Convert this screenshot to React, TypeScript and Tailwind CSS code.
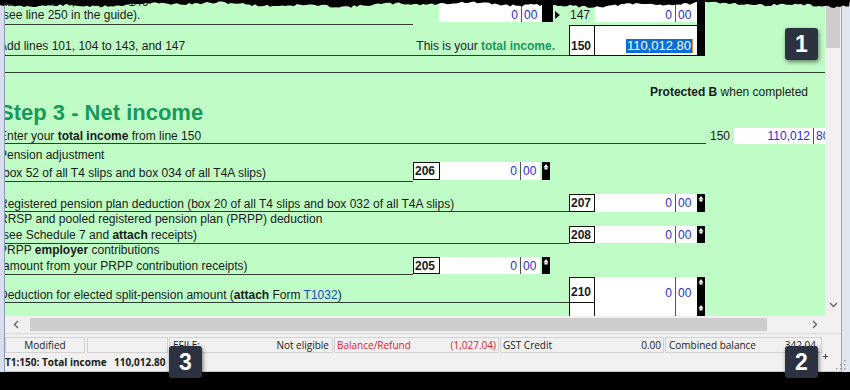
import React from "react";

const LINE = "border-b border-[#2f3d33]";
// the form is scrolled a few pixels right, so the first letter of each line is clipped
const CLIP = "indent-[-3px]";

// jagged "torn paper" edge along the top of the screenshot
const tornPoints = (() => {
  let s = 11;
  const rnd = () => {
    s = (s * 9301 + 49297) % 233280;
    return s / 233280;
  };
  const pts: string[] = ["0,0"];
  for (let x = 0; x <= 850; x += 3) {
    const base = 3.4 + 1.4 * Math.sin(x / 41) + 0.9 * Math.sin(x / 13);
    pts.push(`${x},${Math.max(1.5, base + rnd() * 2.4).toFixed(1)}`);
  }
  pts.push("850,0");
  return pts.join(" ");
})();

function Arrow() {
  return (
    <svg width="6" height="6" viewBox="0 0 6 6" className="block">
      <path d="M3 0L5.5 3.5H0.5Z" fill="#fff" />
      <rect x="1.5" y="3.5" width="3" height="2" fill="#fff" />
    </svg>
  );
}

function Spin({ h }: { h: string }) {
  return (
    <div className={`flex w-[8px] shrink-0 justify-center bg-black pt-[2px] ${h}`}>
      <Arrow />
    </div>
  );
}

function Money({
  box,
  dollars,
  tp = "",
  text = "0",
  cents = "00",
}: {
  box: string;
  dollars: string;
  tp?: string;
  text?: string;
  cents?: string;
}) {
  return (
    <div className={`flex shrink-0 bg-white text-[#2b2bdc] ${box}`}>
      <div className={`pr-[3px] text-right ${dollars} ${tp}`}>{text}</div>
      <div className="w-px self-stretch bg-[#555]" />
      <div className={`pl-[2px] ${tp}`}>{cents}</div>
    </div>
  );
}

function LeftField({ label, h }: { label: string; h: string }) {
  return (
    <>
      <div className={`flex w-[27px] shrink-0 items-center border border-[#111] bg-white pl-[1px] font-bold ${h}`}>
        {label}
      </div>
      <Money box={`w-[100px] items-center ${h}`} dollars="w-[80px]" />
      <div className="w-[2px] shrink-0" />
      <Spin h={h} />
    </>
  );
}

function RightField({ label, h, tall = false }: { label: string; h: string; tall?: boolean }) {
  return (
    <>
      <div
        className={`flex w-[26px] shrink-0 border border-[#111] bg-white pl-[1px] font-bold ${
          tall ? "items-end pb-[3px]" : "items-center"
        } ${h}`}
      >
        {label}
      </div>
      <Money
        box={`w-[102px] ${tall ? "items-end" : "items-center"} ${h}`}
        dollars="w-[80px]"
        tp={tall ? "pb-[3px]" : ""}
      />
      <Spin h={h} />
    </>
  );
}

function FormView() {
  return (
    <div className="h-[316px] overflow-hidden bg-[#bffcc6]">
      <div className="-ml-[3px] w-[840px] font-['Liberation_Sans',Arial,sans-serif] text-[12px] leading-[14px] text-[#1a1a1a]">
        <div className="flex h-0 items-start">
          <div className={`-mt-[5px] ${CLIP}`}>Add lines 144, 145, and 146</div>
        </div>

        {/* line 147 */}
        <div className="flex h-[25px] items-start">
          <div className={`flex h-[25px] w-[411px] shrink-0 items-end pb-[2px] ${LINE} ${CLIP}`}>
            (see line 250 in the guide).
          </div>
          <div className="w-[26px] shrink-0" />
          <Money box="h-[22px] w-[103px] items-end" dollars="w-[82px]" />
          <div className="h-[22px] w-[11px] shrink-0 bg-black" />
          <div className="flex h-[22px] w-[16px] shrink-0 items-end pb-[3px] pl-[2px]">
            <svg width="5" height="8" viewBox="0 0 5 8" className="block">
              <path d="M0 0L5 4L0 8Z" fill="#111" />
            </svg>
          </div>
          <div className="flex h-[22px] w-[26px] shrink-0 items-end pl-[1px]">147</div>
          <Money box="h-[22px] w-[102px] items-end" dollars="w-[80px]" />
          <div className="h-[25px] w-[8px] shrink-0 bg-black" />
        </div>

        {/* line 150 */}
        <div className="flex h-[31px] items-start">
          <div className={`flex h-[31px] w-[567px] shrink-0 items-end justify-between pb-[2px] pr-[14px] ${LINE}`}>
            <span className={CLIP}>Add lines 101, 104 to 143, and 147</span>
            <span>
              This is your <b className="text-[#17995a]">total income.</b>
            </span>
          </div>
          <div className="flex h-[31px] w-[26px] shrink-0 items-end border border-[#111] bg-white pb-[2px] pl-[1px] font-bold">
            150
          </div>
          <div className="flex h-[31px] w-[102px] shrink-0 items-end justify-end border-y border-[#111] bg-white pb-[2px] pr-[4px]">
            <span className="bg-[#0a6ed8] px-[1px] text-[13px] leading-[14px] text-white">110,012.80</span>
            <span className="h-[14px] w-px bg-[#e08a2a]" />
          </div>
          <div className="h-[31px] w-[8px] shrink-0 bg-black" />
        </div>

        <div className={`h-[17px] w-[830px] ${LINE}`} />

        <div className="mt-[12px] h-[14px] w-[806px] text-right">
          <b>Protected B</b> when completed
        </div>

        <div className={`mt-[1px] h-[26px] text-[22px] font-bold leading-[26px] text-[#17995a] ${CLIP}`}>
          Step 3 - Net income
        </div>

        <div className="flex h-[18px] items-start">
          <div className={`flex h-[18px] w-[704px] shrink-0 items-end ${LINE}`}>
            <span className={CLIP}>
              Enter your <b>total income</b> from line 150
            </span>
          </div>
          <div className="flex h-[18px] w-[28px] shrink-0 items-end justify-end pb-[1px] pr-[4px]">150</div>
          <Money box="mt-[2px] h-[16px] w-[100px] items-center" dollars="w-[79px]" text="110,012" cents="80" />
        </div>

        <div className={`flex h-[18px] items-end ${CLIP}`}>Pension adjustment</div>

        <div className="flex h-[20px] items-start">
          <div className={`flex h-[20px] w-[411px] shrink-0 items-end pb-[1px] ${LINE} ${CLIP}`}>
            (box 52 of all T4 slips and box 034 of all T4A slips)
          </div>
          <LeftField label="206" h="h-[18px]" />
        </div>

        <div className="mt-[12px] flex h-[18px] items-start">
          <div className={`flex h-[18px] w-[567px] shrink-0 items-end ${LINE} ${CLIP}`}>
            Registered pension plan deduction (box 20 of all T4 slips and box 032 of all T4A slips)
          </div>
          <RightField label="207" h="h-[18px]" />
        </div>

        <div className={`h-[14px] ${CLIP}`}>RRSP and pooled registered pension plan (PRPP) deduction</div>

        <div className="flex h-[18px] items-start">
          <div className={`flex h-[18px] w-[567px] shrink-0 items-end pb-[1px] ${LINE}`}>
            <span className={CLIP}>
              (see Schedule 7 and <b>attach</b> receipts)
            </span>
          </div>
          <RightField label="208" h="h-[17px]" />
        </div>

        <div className={`h-[13px] leading-[13px] ${CLIP}`}>
          PRPP <b>employer</b> contributions
        </div>

        <div className="flex h-[18px] items-start">
          <div className={`flex h-[18px] w-[411px] shrink-0 items-end pb-[1px] ${LINE} ${CLIP}`}>
            (amount from your PRPP contribution receipts)
          </div>
          <LeftField label="205" h="h-[17px]" />
        </div>

        <div className="mt-[2px] flex h-[26px] items-start">
          <div className={`flex h-[26px] w-[567px] shrink-0 items-end ${LINE}`}>
            <span className={CLIP}>
              Deduction for elected split-pension amount (<b>attach</b> Form{" "}
              <span className="text-[#2244cc]">T1032</span>)
            </span>
          </div>
          <RightField label="210" h="h-[26px]" tall />
        </div>

        <div className="flex h-[27px] items-start">
          <div className="w-[567px] shrink-0" />
          <div className="h-[27px] w-[26px] shrink-0 border-x border-b border-[#111] bg-white" />
          <Money box="h-[27px] w-[102px] items-end" dollars="w-[80px]" text="" cents="" />
          <Spin h="h-[27px]" />
        </div>
      </div>
    </div>
  );
}

function Chevron({ dir }: { dir: "left" | "right" | "down" }) {
  if (dir === "down")
    return (
      <svg width="9" height="6" viewBox="0 0 9 6" className="block">
        <path d="M1 1L4.5 4.5L8 1" stroke="#606060" strokeWidth="1.3" fill="none" />
      </svg>
    );
  return (
    <svg width="6" height="9" viewBox="0 0 6 9" className="block">
      <path
        d={dir === "left" ? "M5 1L1.5 4.5L5 8" : "M1 1L4.5 4.5L1 8"}
        stroke="#606060"
        strokeWidth="1.3"
        fill="none"
      />
    </svg>
  );
}

function StatusBar() {
  return (
    <div className="flex h-[39px] flex-col border-b border-[#b9cde6] font-['Open_Sans',sans-serif] text-[10px] leading-[14px] text-[#1a1a1a]">
      <div className="h-[4px] border-t border-[#d6d6d6]" />
      <div className="flex h-[16px] gap-[1px]">
        <div className="flex w-[80px] items-center justify-center border border-[#d2d2d2]">Modified</div>
        <div className="ml-[1px] w-[81px] border border-[#d2d2d2]" />
        <div className="flex w-[164px] items-center justify-between border border-[#d2d2d2] pl-[3px] pr-[3px]">
          <span>EFILE:</span>
          <span>Not eligible</span>
        </div>
        <div className="flex w-[165px] items-center justify-between border border-[#d2d2d2] pl-[2px] pr-[2px] text-[#e3232c]">
          <span>Balance/Refund</span>
          <span>(1,027.04)</span>
        </div>
        <div className="flex w-[164px] items-center justify-between border border-[#d2d2d2] pl-[2px] pr-[2px]">
          <span>GST Credit</span>
          <span>0.00</span>
        </div>
        <div className="flex w-[157px] items-center justify-between border border-[#d2d2d2] pl-[3px] pr-[5px]">
          <span>Combined balance</span>
          <span>342.04</span>
        </div>
      </div>
      <div className="flex h-[18px] items-center font-bold">
        <span className="w-[109px]">T1:150: Total income</span>
        <span>110,012.80</span>
        <svg width="5" height="5" viewBox="0 0 5 5" className="mb-[12px] ml-auto mr-[13px]">
          <path d="M2.5 0V5M0 2.5H5" stroke="#444" strokeWidth="1" />
        </svg>
      </div>
    </div>
  );
}

function Badge({ n, pos }: { n: string; pos: string }) {
  return (
    <div
      className={`absolute flex h-[32px] w-[33px] items-center justify-center rounded-[3px] bg-[#2c3240] font-['Liberation_Sans',Arial,sans-serif] text-[23px] font-bold text-white shadow-[1px_2px_4px_rgba(0,0,0,0.5)] ${pos}`}
    >
      {n}
    </div>
  );
}

export default function App() {
  return (
    <div className="relative h-[390px] w-[850px] overflow-hidden bg-black">
      <div className="flex h-[372px] w-[850px] bg-[#f0f0f0]">
        <div className="w-[5px] shrink-0 border-r border-[#8d98b2] bg-[#d7def0]" />
        <div className="flex w-[836px] shrink-0 flex-col">
          <div className="flex h-[333px]">
            <div className="flex w-[820px] flex-col">
              <FormView />
              <div className="flex h-[17px] items-center bg-[#f0f0f0]">
                <div className="flex w-[21px] justify-center">
                  <Chevron dir="left" />
                </div>
                <div className="ml-[4px] h-[13px] w-[737px] bg-[#cdcdcd]" />
                <div className="flex flex-1 justify-end pr-[7px]">
                  <Chevron dir="right" />
                </div>
              </div>
            </div>
            <div className="flex w-[16px] flex-col">
              <div className="flex h-[316px] flex-col bg-[#f0f0f0]">
                <div className="mx-[1px] h-[48px] bg-[#cdcdcd]" />
                <div className="flex flex-1 items-end justify-center pb-[8px]">
                  <Chevron dir="down" />
                </div>
              </div>
              <div className="h-[17px] bg-[#f0f0f0]" />
            </div>
          </div>
          <StatusBar />
        </div>
        <div className="w-[9px] shrink-0 border-l border-[#a3a3a3] bg-[#dfe6ef]" />
      </div>

      <svg className="absolute left-0 top-0" width="850" height="14" viewBox="0 0 850 14">
        <polygon points={tornPoints} fill="#000" />
      </svg>

      <svg className="absolute left-[835px] top-[359px]" width="11" height="11" viewBox="0 0 11 11">
        {[
          [9, 1],
          [9, 5],
          [5, 5],
          [9, 9],
          [5, 9],
          [1, 9],
        ].map(([x, y]) => (
          <rect key={`${x}-${y}`} x={x} y={y} width="1.5" height="1.5" fill="#9a9a9a" />
        ))}
      </svg>

      <Badge n="1" pos="left-[785px] top-[28px]" />
      <Badge n="2" pos="left-[785px] top-[346px]" />
      <Badge n="3" pos="left-[169px] top-[346px]" />
    </div>
  );
}
